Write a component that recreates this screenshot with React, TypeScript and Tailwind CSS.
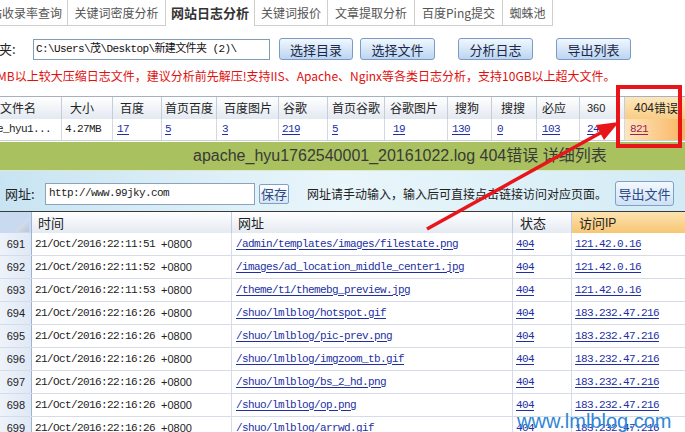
import React from 'react';

const cjk = "font-['Noto_Sans_CJK_SC',sans-serif]";
const mono = "font-['Liberation_Mono','Noto_Sans_CJK_SC',monospace] text-[11px] tracking-[-0.6px]";
const sans = "font-['Liberation_Sans','Noto_Sans_CJK_SC',sans-serif]";
const link = 'text-[#1d2fa3] underline underline-offset-2';

const tabs = [
  { label: '关键词密度分析', w: 'w-[98px]' },
  { label: '网站日志分析', w: 'w-[89px]', active: true },
  { label: '关键词报价', w: 'w-[73px]' },
  { label: '文章提取分析', w: 'w-[87px]' },
  { label: '百度Ping提交', w: 'w-[88px]' },
  { label: '蜘蛛池', w: 'w-[50px]' },
];

const summaryCols = [
  { head: '大小', value: '4.27MB', w: 'w-[51px]', hp: 'pl-[8px]', dp: 'pl-[3px]', isLink: false },
  { head: '百度', value: '17', w: 'w-[49px]', hp: 'pl-[7px]', dp: 'pl-[4px]', isLink: true },
  { head: '首页百度', value: '5', w: 'w-[55px]', hp: 'pl-[3px]', dp: 'pl-[3px]', isLink: true },
  { head: '百度图片', value: '3', w: 'w-[62px]', hp: 'pl-[7px]', dp: 'pl-[5px]', isLink: true },
  { head: '谷歌', value: '219', w: 'w-[49px]', hp: 'pl-[4px]', dp: 'pl-[3px]', isLink: true },
  { head: '首页谷歌', value: '5', w: 'w-[57px]', hp: 'pl-[4px]', dp: 'pl-[4px]', isLink: true },
  { head: '谷歌图片', value: '19', w: 'w-[63px]', hp: 'pl-[5px]', dp: 'pl-[8px]', isLink: true },
  { head: '搜狗', value: '130', w: 'w-[44px]', hp: 'pl-[7px]', dp: 'pl-[4px]', isLink: true },
  { head: '搜搜', value: '0', w: 'w-[45px]', hp: 'pl-[9px]', dp: 'pl-[5px]', isLink: true },
  { head: '必应', value: '103', w: 'w-[43px]', hp: 'pl-[5px]', dp: 'pl-[5px]', isLink: true },
  { head: '360', value: '24', w: 'w-[45px]', hp: 'pl-[7px]', dp: 'pl-[7px]', isLink: true },
];

const rows = [
  { n: 691, t: '21/Oct/2016:22:11:51', url: '/admin/templates/images/filestate.png', ip: '121.42.0.16' },
  { n: 692, t: '21/Oct/2016:22:11:52', url: '/images/ad_location_middle_center1.jpg', ip: '121.42.0.16' },
  { n: 693, t: '21/Oct/2016:22:11:53', url: '/theme/t1/themebg_preview.jpg', ip: '121.42.0.16' },
  { n: 694, t: '21/Oct/2016:22:16:26', url: '/shuo/lmlblog/hotspot.gif', ip: '183.232.47.216' },
  { n: 695, t: '21/Oct/2016:22:16:26', url: '/shuo/lmlblog/pic-prev.png', ip: '183.232.47.216' },
  { n: 696, t: '21/Oct/2016:22:16:26', url: '/shuo/lmlblog/imgzoom_tb.gif', ip: '183.232.47.216' },
  { n: 697, t: '21/Oct/2016:22:16:26', url: '/shuo/lmlblog/bs_2_hd.png', ip: '183.232.47.216' },
  { n: 698, t: '21/Oct/2016:22:16:26', url: '/shuo/lmlblog/op.png', ip: '183.232.47.216' },
  { n: 699, t: '21/Oct/2016:22:16:26', url: '/shuo/lmlblog/arrwd.gif', ip: '183.232.47.216' },
];

function BlueButton({ label, w }: { label: string; w: string }) {
  return (
    <button
      className={`${w} h-[22px] rounded-[3px] border border-[#7a9cc4] bg-linear-to-b from-[#f1f7fe] to-[#bcd5f1] text-[13px] leading-none text-[#1b2a4a] ${cjk}`}
    >
      {label}
    </button>
  );
}

export default function App() {
  return (
    <div className="relative h-[432px] w-[685px] overflow-hidden bg-white text-[#222]">
      {/* tabs */}
      <div className={`flex h-[26px] text-[12px] text-[#555] ${cjk}`}>
        <div className="flex w-[68px] items-center justify-end overflow-hidden whitespace-nowrap border-r border-b border-[#cfcfcf] pr-[5px]">
          网站收录率查询
        </div>
        {tabs.map((tab) => (
          <div
            key={tab.label}
            className={`flex ${tab.w} shrink-0 items-center justify-center whitespace-nowrap border-r border-[#cfcfcf] ${
              tab.active ? 'text-[13px] font-bold text-[#333]' : 'border-b'
            }`}
          >
            {tab.label}
          </div>
        ))}
        <div className="flex-1" />
      </div>

      {/* folder row */}
      <div className="mt-[12px] flex h-[22px] items-center">
        <span className={`-ml-[27px] w-[60px] shrink-0 whitespace-nowrap text-[13px] ${cjk}`}>文件夹:</span>
        <div className={`flex h-[21px] w-[237px] items-center border border-[#7f9db9] px-[2px] ${mono} text-[#111]`}>
          C:\Users\茂\Desktop\新建文件夹 (2)\
        </div>
        <div className="ml-[9px] flex gap-[7px]">
          <BlueButton label="选择目录" w="w-[74px]" />
          <BlueButton label="选择文件" w="w-[75px]" />
        </div>
        <div className="ml-[23px] flex gap-[23px]">
          <BlueButton label="分析日志" w="w-[75px]" />
          <BlueButton label="导出列表" w="w-[75px]" />
        </div>
      </div>

      {/* notice */}
      <div className={`-ml-[3px] mt-[8px] h-[16px] whitespace-nowrap text-[12px] leading-[16px] text-[#e0100f] ${cjk}`}>
        MB以上较大压缩日志文件，建议分析前先解压!支持IIS、Apache、Nginx等各类日志分析，支持10GB以上超大文件。
      </div>

      {/* summary table */}
      <div className="mt-[12px] border-t border-[#a7b0bc]">
        <div className={`flex h-[22px] whitespace-nowrap bg-linear-to-b from-white to-[#e3e9f1] text-[12px] ${cjk}`}>
          <div className="flex w-[62px] items-center overflow-hidden border-r border-[#c5cdd9]">文件名</div>
          {summaryCols.map((c) => (
            <div
              key={c.head}
              className={`flex ${c.w} shrink-0 items-center overflow-hidden border-r border-[#c5cdd9] ${c.hp} ${c.head === '360' ? `${sans} text-[11px]` : ''}`}
            >
              {c.head}
            </div>
          ))}
          <div className="flex flex-1 items-center bg-linear-to-b from-[#fde7bd] to-[#f8cd84] pl-[9px]">
            <span className={`${sans} text-[12px]`}>404</span>
            <span>错误</span>
          </div>
        </div>
        <div className={`flex h-[22px] border-b border-[#c8ced8] ${mono}`}>
          <div className="flex w-[62px] items-center overflow-hidden whitespace-nowrap border-r border-[#d3d9e2]">
            <span className="-ml-[33px]">apache_hyu1...</span>
          </div>
          {summaryCols.map((c) => (
            <div key={c.head} className={`flex ${c.w} shrink-0 items-center border-r border-[#d3d9e2] ${c.dp}`}>
              <span className={c.isLink ? link : ''}>{c.value}</span>
            </div>
          ))}
          <div className="flex flex-1 items-center bg-linear-to-r from-[#fde6bd] to-[#f8b55f] pl-[5px]">
            <span className="text-[#97215a] underline underline-offset-2">821</span>
          </div>
        </div>
      </div>

      {/* green title bar */}
      <div className="mt-[1px] flex h-[29px] items-center border-b border-[#dfe8c8] bg-[#a9c15e] pl-[193px]">
        <span className={`${sans} whitespace-nowrap text-[16px] text-[#3a3a3a]`}>
          apache_hyu1762540001_20161022.log 404错误 详细列表
        </span>
      </div>

      {/* url toolbar */}
      <div className={`flex h-[40px] items-center bg-linear-to-r from-[#c8e4f2] via-[#e9f6fb] to-[#d3ebf5] pt-[5px] text-[13px] ${cjk}`}>
        <span className="ml-[5px] w-[40px]">网址:</span>
        <div className={`flex h-[22px] w-[210px] items-center border border-[#8aa4bf] bg-white px-[3px] ${mono}`}>
          http://www.99jky.com
        </div>
        <button className="ml-[4px] h-[20px] w-[30px] rounded-[2px] border border-[#7ea1c8] bg-linear-to-b from-white to-[#d6e5f5] text-[13px] leading-none text-[#2b4a85]">
          保存
        </button>
        <span className="ml-[18px] w-[300px] whitespace-nowrap text-[12px]">
          网址请手动输入，输入后可直接点击链接访问对应页面。
        </span>
        <button className="ml-[8px] h-[25px] w-[59px] rounded-[3px] border border-[#7ea1c8] bg-linear-to-b from-[#f3f8fe] to-[#cfe1f5] text-[13px] leading-none text-[#2b4a85]">
          导出文件
        </button>
      </div>

      {/* grid header */}
      <div className={`flex h-[22px] border-t border-[#3a3a3a] text-[13px] ${cjk}`}>
        <div className="flex w-[32px] items-end justify-end border-r border-[#9fb3cf] bg-[#c9d9ef] pb-[1px] pr-[2px]">
          <svg width="15" height="14" viewBox="0 0 15 14">
            <defs>
              <linearGradient id="tri" x1="0" y1="0" x2="1" y2="1">
                <stop offset="0" stopColor="#eef3fa" />
                <stop offset="1" stopColor="#b9c6d8" />
              </linearGradient>
            </defs>
            <polygon points="15,0 15,14 0,14" fill="url(#tri)" />
          </svg>
        </div>
        <div className="flex w-[200px] items-center border-r border-[#c5cdd9] bg-linear-to-b from-white to-[#e4eaf2] pl-[6px]">时间</div>
        <div className="flex w-[281px] items-center border-r border-[#c5cdd9] bg-linear-to-b from-white to-[#e4eaf2] pl-[6px]">网址</div>
        <div className="flex w-[59px] items-center border-r border-[#c5cdd9] bg-linear-to-b from-white to-[#e4eaf2] pl-[7px]">状态</div>
        <div className="flex flex-1 items-center bg-linear-to-b from-[#fde3b0] to-[#f7c673] pl-[7px]">
          访问<span className={`${sans} text-[12px]`}>IP</span>
        </div>
      </div>

      {/* grid rows */}
      {rows.map((r) => (
        <div key={r.n} className="flex h-[23px] border-b border-[#d5dce7]">
          <div className={`flex w-[32px] items-center justify-end border-r border-[#9fb3cf] bg-linear-to-r from-[#eef3fa] to-[#dfe8f5] pr-[6px] text-[11px] text-[#222] ${sans}`}>
            {r.n}
          </div>
          <div className="flex w-[200px] items-center whitespace-nowrap border-r border-[#d5dce7] pl-[3px]">
            <span className={mono}>{r.t}</span>
            <span className={`ml-[6px] text-[11px] ${sans}`}>+0800</span>
          </div>
          <div className="flex w-[281px] items-center whitespace-nowrap border-r border-[#d5dce7] pl-[4px]">
            <span className={`${mono} ${link}`}>{r.url}</span>
          </div>
          <div className="flex w-[59px] items-center border-r border-[#d5dce7] pl-[3px]">
            <span className={`${mono} ${link}`}>404</span>
          </div>
          <div className="flex flex-1 items-center pl-[3px]">
            <span className={`${mono} ${link}`}>{r.ip}</span>
          </div>
        </div>
      ))}

      {/* annotation: red box + arrow */}
      <div className="absolute left-[616px] top-[85px] h-[63px] w-[66px] border-[4px] border-[#e8141a]" />
      <svg className="pointer-events-none absolute left-0 top-0" width="685" height="432">
        <line x1="427" y1="229" x2="602" y2="132" stroke="#e8161b" strokeWidth="3.5" />
        <polygon points="619,122 604,140 596,125" fill="#e8161b" />
      </svg>

      {/* watermark */}
      <div className="absolute left-[517px] top-[406px] font-['Liberation_Sans',sans-serif] text-[20px] text-[#2f86d6]">
        www.lmlblog.com
      </div>
    </div>
  );
}
